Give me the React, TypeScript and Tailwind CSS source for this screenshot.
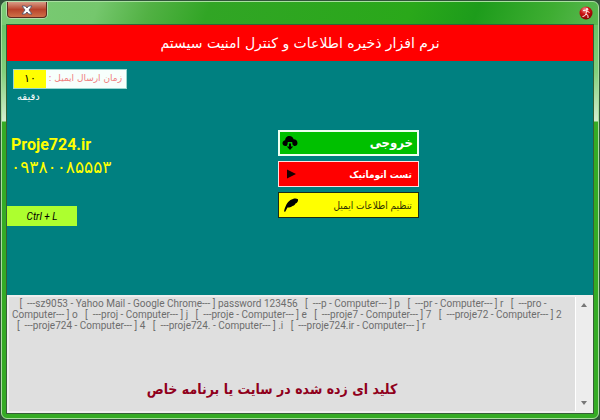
import { useState } from 'react';

const initialLog = [
  '   [  ---sz9053 - Yahoo Mail - Google Chrome--- ] password 123456   [  ---p - Computer--- ] p   [  ---pr - Computer--- ] r   [  ---pro -',
  'Computer--- ] o   [  ---proj - Computer--- ] j   [  ---proje - Computer--- ] e   [  ---proje7 - Computer--- ] 7   [  ---proje72 - Computer--- ] 2',
  '  [  ---proje724 - Computer--- ] 4   [  ---proje724. - Computer--- ] .i   [  ---proje724.ir - Computer--- ] r',
].join('\n');

function CloudIcon() {
  return (
    <svg viewBox="0 0 16 16" className="w-4 h-4 shrink-0" aria-hidden="true">
      <path
        d="M4.500 11C2 11.500 0.500 10 0.500 8.300C0.500 6.600 1.700 5.500 3.200 5.300C3 3 5 1 7.500 1C9.600 1 11.200 2.400 11.600 4.300C14 4.300 15.500 6 15.500 8C15.500 10 14 11.500 12 11L10.500 9.500L10.200 7H5.800L5.500 9.500Z"
        fill="black"
      />
      <path d="M7 8.500H9V11.500H11.200L8 15L4.800 11.500H7Z" fill="black" />
    </svg>
  );
}

function PlayIcon() {
  return (
    <svg viewBox="0 0 16 16" className="w-4 h-4 shrink-0" aria-hidden="true">
      <path d="M4 3.500L13 8L4 12.500Z" fill="#1a0000" />
    </svg>
  );
}

function FeatherIcon() {
  return (
    <svg viewBox="0 0 16 16" className="w-4 h-4 shrink-0" aria-hidden="true">
      <path
        d="M1 14.500C2 10 4 5 7.500 3C10 1.500 13 0.800 15 2.200C15.400 4.500 14 6 12.500 6.500C12 8 10.500 8.700 9.500 9C8 10.300 6.500 10.500 4.500 10.500L2.200 14.800Z"
        fill="black"
      />
    </svg>
  );
}

function TitleBar() {
  return (
    <header className="h-[22px] shrink-0 flex items-start justify-between px-px">
      <button
        aria-label="Close"
        className="w-10 h-4 flex items-center justify-center rounded-b-sm border border-t-0 border-[#5f2a20] bg-linear-to-b from-[#d79a86] via-[#b8432b] to-[#cf7048] shadow-[0_0_0_1px_#b5dcac]"
      >
        <svg viewBox="0 0 12 10" className="w-3 h-2.5" aria-hidden="true">
          <path
            d="M1 1H4.300L6 3L7.700 1H11L8 5L11 9H7.700L6 7L4.300 9H1L4 5Z"
            fill="white"
            stroke="#56566b"
            strokeWidth="0.9"
          />
        </svg>
      </button>
      <svg viewBox="0 0 14 14" className="w-3.5 h-3.5 mt-1" aria-hidden="true">
        <defs>
          <radialGradient id="badge" cx="0.4" cy="0.25" r="0.8">
            <stop offset="0" stopColor="#f0a0a0" />
            <stop offset="0.4" stopColor="#d01414" />
            <stop offset="1" stopColor="#7c0000" />
          </radialGradient>
        </defs>
        <circle cx="7" cy="7" r="6.500" fill="url(#badge)" />
        <circle cx="8" cy="3.200" r="1.200" fill="#ffe8e8" />
        <path
          d="M4 4.500L6.500 4.500L8 5L10.500 6.500M7.500 5L7 8L9 9.500L9 12M7 8L5.500 10L3.500 10.500"
          fill="none"
          stroke="#ffe8e8"
          strokeWidth="1"
        />
      </svg>
    </header>
  );
}

export default function App() {
  const [minutes, setMinutes] = useState('۱۰');
  const [log, setLog] = useState(initialLog);

  return (
    <div className="min-h-screen flex bg-[#31543a] p-px font-['DejaVu_Sans',sans-serif]">
      <div className="flex-1 min-w-0 flex flex-col rounded-md border border-[#a9dfa0] px-1 pb-1 bg-[linear-gradient(to_bottom,transparent_0,transparent_23px,#69c468_23px,#82cf7b_70px,#d5edd0_119px,#35ab25_120px,#35ab25_100%),linear-gradient(110deg,#7acb75_0%,#75c76d_13%,#52b144_20%,#31a525_28%,#2aa81a_55%,#1d9c1b_64%,#3ead32_74%,#67bd60_84%,#60b957_100%)]">
        <TitleBar />

        <main className="flex-1 flex flex-col border border-[#356036] bg-[#008080]">
          <h1
            dir="rtl"
            className="h-9 shrink-0 flex items-center justify-center bg-[#ff0000] text-white text-[14px] leading-5"
          >
            نرم افزار ذخیره اطلاعات و کنترل امنیت سیستم
          </h1>

          <section className="flex-1 grid grid-cols-[14fr_141px_9fr]">
            <div className="flex flex-col items-start pt-2">
              <div className="ml-1.5 flex h-5 border border-[#9ad6cf] bg-[#f7fffc]">
                <input
                  id="minutes"
                  value={minutes}
                  onChange={(e) => setMinutes(e.target.value)}
                  className="w-8 bg-[#ffff00] text-center text-[11px] text-black outline-none"
                />
                <label
                  htmlFor="minutes"
                  dir="rtl"
                  className="w-20 pr-1 flex items-center justify-start text-[9px] whitespace-nowrap text-[#f08080]"
                >
                  زمان ارسال ایمیل :
                </label>
              </div>
              <span dir="rtl" className="ml-2.5 text-[10px] leading-4 text-white">
                دقیقه
              </span>

              <a
                href="#proje724"
                className="mt-7 ml-1 font-['Roboto',sans-serif] font-bold text-[16px] leading-6 text-[#ffff00]"
              >
                Proje724.ir
              </a>
              <span className="ml-1 text-[17px] leading-5 text-[#ffff00]">۰۹۳۸۰۰۸۵۵۵۳</span>

              <button className="mt-[29px] w-[70px] h-5 bg-[#adff2f] font-['Roboto',sans-serif] italic text-[10px] text-black">
                Ctrl + L
              </button>
            </div>

            <div dir="rtl" className="flex flex-col gap-[5px] pt-[69px] font-['DejaVu_Sans_Condensed','DejaVu_Sans',sans-serif]">
              <button className="h-[26px] flex items-center justify-between pr-1 pl-0.5 border-2 border-[#effff0] bg-[#00c000] text-white font-bold text-[13px]">
                خروجی
                <CloudIcon />
              </button>
              <button className="h-[26px] flex items-center justify-between pr-1.5 pl-1 border border-[#ffe0e0] bg-[#ff0000] text-white font-bold text-[10px]">
                تست اتوماتیک
                <PlayIcon />
              </button>
              <button className="h-[26px] flex items-center justify-between pr-1.5 pl-1 border border-[#1c2c14] bg-[#ffff00] text-[#303000] text-[10px]">
                تنظیم اطلاعات ایمیل
                <FeatherIcon />
              </button>
            </div>
          </section>

          <section className="relative h-[118px] shrink-0 flex border-2 border-[#eeeeee] bg-[#dfdfdf]">
            <textarea
              aria-label="Log"
              value={log}
              onChange={(e) => setLog(e.target.value)}
              spellCheck={false}
              className="flex-1 min-w-0 resize-none overflow-hidden whitespace-pre pl-[3px] pt-px font-['Roboto',sans-serif] text-[10px] leading-[11px] text-[#6d6d6d] outline-none"
            />
            <div className="w-4 flex flex-col items-center justify-between py-1.5 border-l border-white bg-[#ededed]">
              <button aria-label="Scroll up" className="flex">
                <svg viewBox="0 0 6 4" className="w-1.5 h-1" aria-hidden="true">
                  <path d="M0 4L3 0L6 4Z" fill="#777777" />
                </svg>
              </button>
              <button aria-label="Scroll down" className="flex">
                <svg viewBox="0 0 6 4" className="w-1.5 h-1" aria-hidden="true">
                  <path d="M0 0L3 4L6 0Z" fill="#777777" />
                </svg>
              </button>
            </div>
            <p
              dir="rtl"
              className="absolute inset-x-0 bottom-2.5 pr-14 text-center font-['DejaVu_Sans_Condensed','DejaVu_Sans',sans-serif] font-bold text-[14px] leading-6 text-[#90001c] pointer-events-none"
            >
              کلید ای زده شده در سایت یا برنامه خاص
            </p>
          </section>
        </main>
      </div>
    </div>
  );
}
